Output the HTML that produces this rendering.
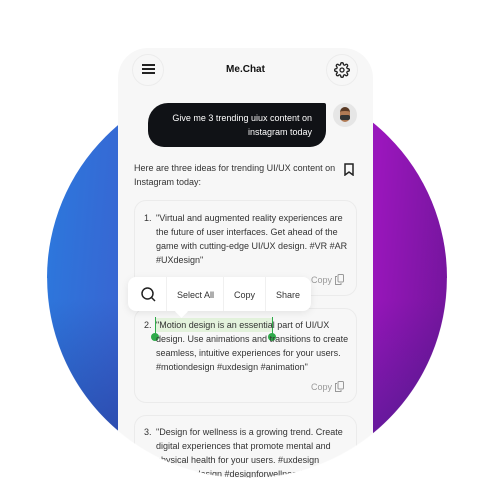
<!DOCTYPE html>
<html style="overflow:hidden;width:500px;height:500px"><head><style>
*{margin:0;padding:0;box-sizing:border-box}
body{width:500px;height:500px;background:#fff;position:relative;overflow:hidden;font-family:"Liberation Sans",sans-serif;color:#2a2a2a}
.circle{position:absolute;left:47px;top:78px;width:400px;height:400px;border-radius:50%;
background:linear-gradient(180deg,rgba(20,30,120,0) 55%,rgba(20,30,110,.45) 100%),linear-gradient(95deg,#2b7ade 0%,#3a62d0 25%,#6a32c0 50%,#9a16bc 78%,#6e1598 100%)}
.phone{position:absolute;left:118px;top:48px;width:255px;height:430px;background:#f7f7f7;border-radius:30px 30px 0 0;overflow:hidden}
.abs{position:absolute}
.t{position:absolute;font-size:9px;line-height:14px;color:#333;white-space:nowrap}
.iconc{position:absolute;width:32px;height:32px;border-radius:50%;border:1px solid #ececec;background:#f7f7f7}
.card{position:absolute;left:16px;width:223px;border:1px solid #ebebeb;border-radius:12px;background:#f7f7f7}
.copy{position:absolute;font-size:9px;color:#999}
.mask{position:absolute;left:0;top:278px;width:500px;height:222px;background:radial-gradient(circle 200px at 247px 0px,transparent 199.5px,#fff 200.5px)}
</style></head><body>
<div class="circle"></div>
<div class="phone">
  <div class="iconc" style="left:14px;top:6px"></div>
  <div class="abs" style="left:24px;top:16px;width:13px;height:2px;background:#222;box-shadow:0 4px 0 #222,0 8px 0 #222"></div>
  <div class="abs" style="left:0;width:255px;top:16px;text-align:center;font-size:10px;font-weight:bold;color:#111">Me.Chat</div>
  <div class="iconc" style="left:208px;top:6px"></div>
  <svg class="abs" style="left:216px;top:14px" width="16" height="16" viewBox="0 0 24 24" fill="none" stroke="#222" stroke-width="2"><circle cx="12" cy="12" r="3"/><path d="M19.4 15a1.7 1.7 0 0 0 .3 1.8l.1.1a2 2 0 1 1-2.8 2.8l-.1-.1a1.7 1.7 0 0 0-1.8-.3 1.7 1.7 0 0 0-1 1.5V21a2 2 0 1 1-4 0v-.1a1.7 1.7 0 0 0-1.1-1.5 1.7 1.7 0 0 0-1.8.3l-.1.1a2 2 0 1 1-2.8-2.8l.1-.1a1.7 1.7 0 0 0 .3-1.8 1.7 1.7 0 0 0-1.5-1H3a2 2 0 1 1 0-4h.1a1.7 1.7 0 0 0 1.5-1.1 1.7 1.7 0 0 0-.3-1.8l-.1-.1a2 2 0 1 1 2.8-2.8l.1.1a1.7 1.7 0 0 0 1.8.3H9a1.7 1.7 0 0 0 1-1.5V3a2 2 0 1 1 4 0v.1a1.7 1.7 0 0 0 1 1.5 1.7 1.7 0 0 0 1.8-.3l.1-.1a2 2 0 1 1 2.8 2.8l-.1.1a1.7 1.7 0 0 0-.3 1.8V9a1.7 1.7 0 0 0 1.5 1H21a2 2 0 1 1 0 4h-.1a1.7 1.7 0 0 0-1.5 1z"/></svg>
  <div class="abs" style="left:30px;top:55px;width:178px;height:44px;background:#101216;border-radius:20px 2px 16px 16px"></div>
  <div class="t" style="left:30px;top:63px;width:164px;text-align:right;color:#fff;white-space:normal">Give me 3 trending uiux content on<br>instagram today</div>
  <div class="abs" style="left:215px;top:55px;width:24px;height:24px;border-radius:50%;background:#e6e6e6"></div>
  <div class="abs" style="left:222px;top:59px;width:10px;height:15px;border-radius:5px;background:#b07a55;border-top:4px solid #5a3a25"></div>
  <div class="abs" style="left:222px;top:67px;width:10px;height:5px;background:#333;border-radius:2px"></div>
  <div class="t" style="left:16px;top:113px">Here are three ideas for trending UI/UX content on<br>Instagram today:</div>
  <svg class="abs" style="left:226px;top:115px" width="10" height="13" viewBox="0 0 10 13" fill="none" stroke="#222" stroke-width="1.5"><path d="M1 1h8v11L5 9 1 12z"/></svg>

  <div class="card" style="top:152px;height:96px"></div>
  <div class="t" style="left:26px;top:163px">1.</div>
  <div class="t" style="left:38px;top:163px">"Virtual and augmented reality experiences are<br>the future of user interfaces. Get ahead of the<br>game with cutting-edge UI/UX design. #VR #AR<br>#UXdesign"</div>
  <div class="copy" style="left:193px;top:227px">Copy</div>
  <svg class="abs" style="left:217px;top:226px" width="9" height="11" viewBox="0 0 9 11" fill="none" stroke="#999"><rect x="3" y="0.5" width="5.5" height="7.5" rx="1"/><path d="M2 2.5H.5V10.5H6V9"/></svg>

  <div class="card" style="top:260px;height:95px"></div>
  <div class="abs" style="left:37px;top:270px;width:117px;height:14px;background:#e3f2dc"></div>
  <div class="abs" style="left:37px;top:269px;width:1px;height:20px;background:#2faa4a"></div>
  <div class="abs" style="left:154px;top:269px;width:1px;height:20px;background:#2faa4a"></div>
  <div class="abs" style="left:33px;top:285px;width:8px;height:8px;border-radius:50%;background:#2faa4a"></div>
  <div class="abs" style="left:150px;top:285px;width:8px;height:8px;border-radius:50%;background:#2faa4a"></div>
  <div class="t" style="left:26px;top:270px">2.</div>
  <div class="t" style="left:38px;top:270px">"Motion design is an essential part of UI/UX<br>design. Use animations and transitions to create<br>seamless, intuitive experiences for your users.<br>#motiondesign #uxdesign #animation"</div>
  <div class="copy" style="left:193px;top:334px">Copy</div>
  <svg class="abs" style="left:217px;top:333px" width="9" height="11" viewBox="0 0 9 11" fill="none" stroke="#999"><rect x="3" y="0.5" width="5.5" height="7.5" rx="1"/><path d="M2 2.5H.5V10.5H6V9"/></svg>

  <div class="card" style="top:367px;height:80px"></div>
  <div class="t" style="left:26px;top:377px">3.</div>
  <div class="t" style="left:38px;top:377px">"Design for wellness is a growing trend. Create<br>digital experiences that promote mental and<br>physical health for your users. #uxdesign<br>#wellnessdesign #designforwellness"</div>
</div>
<div class="abs" style="left:128px;top:277px;width:183px;height:34px;background:#fff;border-radius:8px;box-shadow:0 2px 8px rgba(0,0,0,.08)"></div>
<div class="abs" style="left:177px;top:307px;width:9px;height:9px;background:#fff;transform:rotate(45deg)"></div>
<svg class="abs" style="left:141px;top:287px" width="15" height="15" viewBox="0 0 15 15" fill="none" stroke="#222" stroke-width="1.5"><circle cx="6.5" cy="6.5" r="5.5"/><path d="M10.5 10.5L14 14"/></svg>
<div class="abs" style="left:166px;top:277px;width:1px;height:34px;background:#f0f0f0"></div>
<div class="abs" style="left:223px;top:277px;width:1px;height:34px;background:#f0f0f0"></div>
<div class="abs" style="left:265px;top:277px;width:1px;height:34px;background:#f0f0f0"></div>
<div class="t" style="left:177px;top:288px">Select All</div>
<div class="t" style="left:234px;top:288px">Copy</div>
<div class="t" style="left:276px;top:288px">Share</div>
<div class="mask"></div>
</body></html>
